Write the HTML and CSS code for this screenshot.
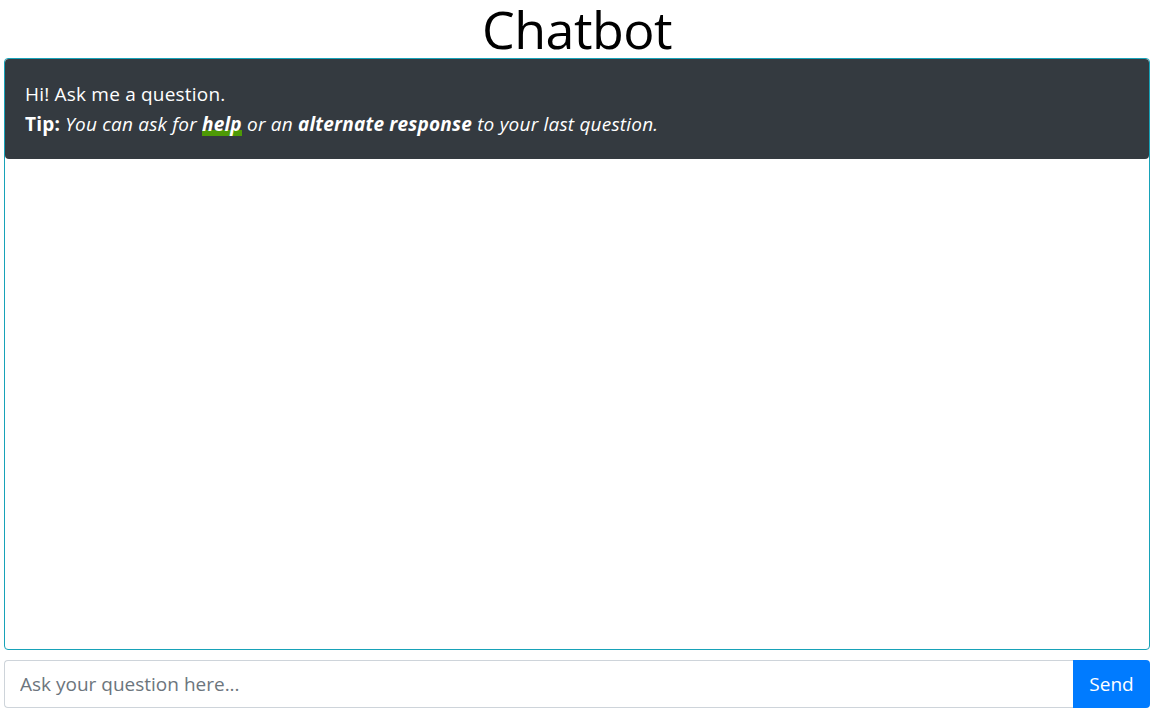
FILE: index.html
```html
<!DOCTYPE html>
<html lang="en">
<head>
<meta charset="utf-8">
<title>Chatbot</title>
<link rel="stylesheet" href="styles.css">
</head>
<body>
<div class="page">
  <h1 class="title">Chatbot</h1>
  <div class="chat">
    <div class="msg">
      <p class="line">Hi! Ask me a question.</p>
      <p class="line"><b>Tip:</b> <i>You can ask for <b class="hl">help</b> or an <b>alternate response</b> to your last question.</i></p>
    </div>
  </div>
  <form class="ask">
    <input class="ask-input" type="text" placeholder="Ask your question here...">
    <button class="ask-btn" type="button">Send</button>
  </form>
</div>
</body>
</html>
```
FILE: styles.css
```css
html, body {
  margin: 0;
  padding: 0;
  background: #fff;
}
body {
  font-family: "Open Sans", "Noto Sans", sans-serif;
  color: #212529;
}
.page {
  display: flex;
  flex-direction: column;
  padding: 0 3px 0 4px;
  height: 710px;
  box-sizing: border-box;
}
.title {
  margin: 0;
  text-align: center;
  font-size: 52px;
  line-height: 58px;
  font-weight: 500;
  color: #000;
  letter-spacing: -0.5px;
}
.chat {
  border: 1px solid #17a2b8;
  border-radius: 4px;
  height: 592px;
  box-sizing: border-box;
}
.msg {
  background: #343a40;
  color: #fff;
  border-radius: 4px;
  padding: 20px;
  font-size: 19px;
  line-height: 30px;
  letter-spacing: 0.2px;
}
.line {
  margin: 0;
}
.hl {
  background: linear-gradient(to bottom, transparent 72%, #4e9a06 72%, #4e9a06 96%, transparent 96%);
}
.ask {
  display: flex;
  margin: 10px 0 0;
  height: 48px;
}
.ask-input {
  flex: 1;
  min-width: 0;
  border: 1px solid #ced4da;
  border-right: none;
  border-radius: 4px 0 0 4px;
  padding: 0 15px;
  font-family: inherit;
  font-size: 19px;
  color: #495057;
  outline: none;
}
.ask-input::placeholder {
  color: #6c757d;
}
.ask-btn {
  border: none;
  background: #007bff;
  color: #fff;
  border-radius: 0 4px 4px 0;
  padding: 0 16px;
  font-family: inherit;
  font-size: 19px;
  width: 77px;
}
```
